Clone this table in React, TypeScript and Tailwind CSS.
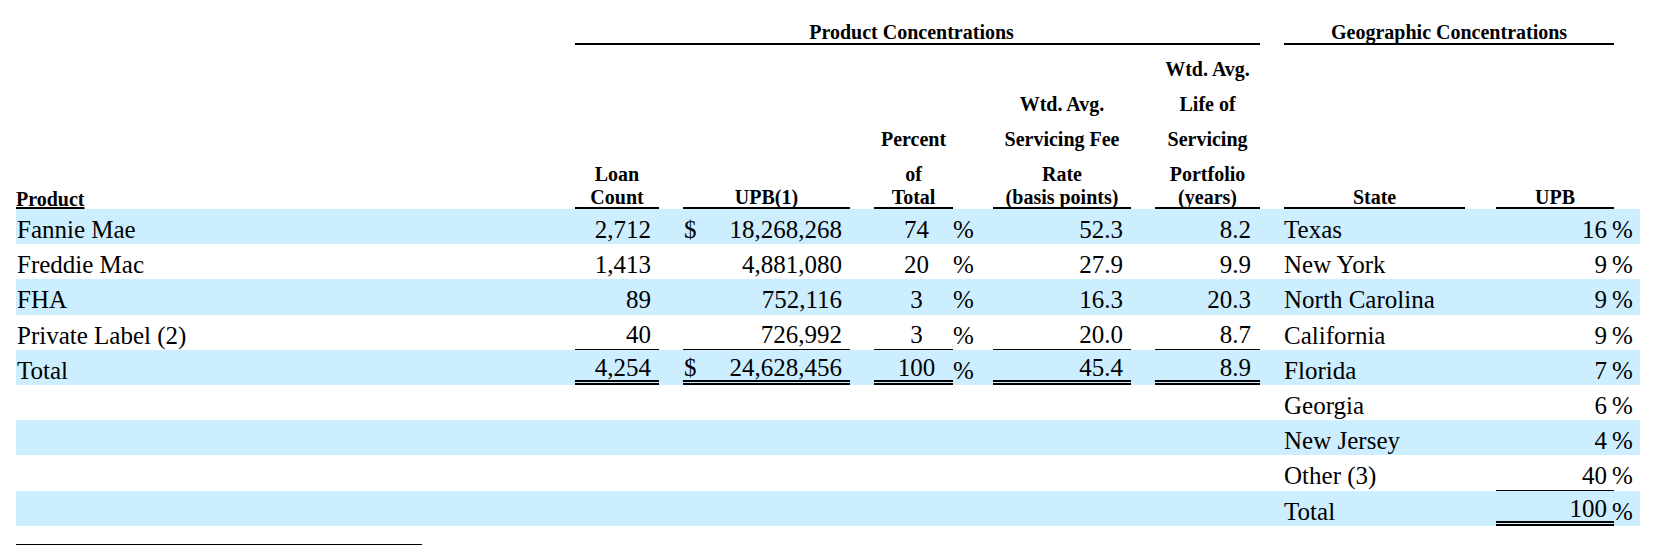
import React from "react";

type Line = "none" | "single" | "double";

type Row = {
  name: string;
  loan: string;
  dollar: boolean;
  upb: string;
  pct: string;
  pctSign: boolean;
  fee: string;
  life: string;
  state: string;
  gupb: string;
  blue: boolean;
  line: Line;
  gline: Line;
};

const rows: Row[] = [
  { name: "Fannie Mae", loan: "2,712", dollar: true, upb: "18,268,268", pct: "74", pctSign: true, fee: "52.3", life: "8.2", state: "Texas", gupb: "16", blue: true, line: "none", gline: "none" },
  { name: "Freddie Mac", loan: "1,413", dollar: false, upb: "4,881,080", pct: "20", pctSign: true, fee: "27.9", life: "9.9", state: "New York", gupb: "9", blue: false, line: "none", gline: "none" },
  { name: "FHA", loan: "89", dollar: false, upb: "752,116", pct: "3", pctSign: true, fee: "16.3", life: "20.3", state: "North Carolina", gupb: "9", blue: true, line: "none", gline: "none" },
  { name: "Private Label (2)", loan: "40", dollar: false, upb: "726,992", pct: "3", pctSign: true, fee: "20.0", life: "8.7", state: "California", gupb: "9", blue: false, line: "single", gline: "none" },
  { name: "Total", loan: "4,254", dollar: true, upb: "24,628,456", pct: "100", pctSign: true, fee: "45.4", life: "8.9", state: "Florida", gupb: "7", blue: true, line: "double", gline: "none" },
  { name: "", loan: "", dollar: false, upb: "", pct: "", pctSign: false, fee: "", life: "", state: "Georgia", gupb: "6", blue: false, line: "none", gline: "none" },
  { name: "", loan: "", dollar: false, upb: "", pct: "", pctSign: false, fee: "", life: "", state: "New Jersey", gupb: "4", blue: true, line: "none", gline: "none" },
  { name: "", loan: "", dollar: false, upb: "", pct: "", pctSign: false, fee: "", life: "", state: "Other (3)", gupb: "40", blue: false, line: "none", gline: "single" },
  { name: "", loan: "", dollar: false, upb: "", pct: "", pctSign: false, fee: "", life: "", state: "Total", gupb: "100", blue: true, line: "none", gline: "double" },
];

function lineCls(l: Line): string {
  if (l === "single") return "border-b border-black";
  if (l === "double") return "border-b-[5px] border-double border-black";
  return "";
}

export default function App() {
  return (
    <div className="w-[1662px] h-[546px] overflow-hidden bg-white text-black [font-family:Liberation_Serif,Times_New_Roman,serif]">
      <table className="ml-[16px] w-[1624px] table-fixed border-separate border-spacing-0">
        <colgroup>
          <col className="w-[559px]" />
          <col className="w-[84px]" />
          <col className="w-[24px]" />
          <col className="w-[167px]" />
          <col className="w-[24px]" />
          <col className="w-[79px]" />
          <col className="w-[40px]" />
          <col className="w-[138px]" />
          <col className="w-[24px]" />
          <col className="w-[105px]" />
          <col className="w-[24px]" />
          <col className="w-[181px]" />
          <col className="w-[31px]" />
          <col className="w-[118px]" />
          <col className="w-[26px]" />
        </colgroup>
        <thead className="text-[20px] font-bold leading-[23px]">
          <tr className="h-[52px]">
            <td className="p-0" />
            <td colSpan={9} className="p-0 pt-[21px] align-top">
              <div className="border-b-2 border-black pr-[12px] text-center leading-[22px]">Product Concentrations</div>
            </td>
            <td className="p-0" />
            <td colSpan={3} className="p-0 pt-[21px] align-top">
              <div className="border-b-2 border-black text-center leading-[22px]">Geographic Concentrations</div>
            </td>
            <td className="p-0" />
          </tr>
          <tr className="h-[35px]">
            <td className="p-0" />
            <td className="p-0" />
            <td className="p-0" />
            <td className="p-0" />
            <td className="p-0" />
            <td className="p-0" />
            <td className="p-0" />
            <td className="p-0" />
            <td className="p-0" />
            <td className="p-0 text-center align-middle">Wtd. Avg.</td>
            <td className="p-0" />
            <td className="p-0" />
            <td className="p-0" />
            <td className="p-0" />
            <td className="p-0" />
          </tr>
          <tr className="h-[35px]">
            <td className="p-0" />
            <td className="p-0" />
            <td className="p-0" />
            <td className="p-0" />
            <td className="p-0" />
            <td className="p-0" />
            <td className="p-0" />
            <td className="p-0 text-center align-middle">Wtd. Avg.</td>
            <td className="p-0" />
            <td className="p-0 text-center align-middle">Life of</td>
            <td className="p-0" />
            <td className="p-0" />
            <td className="p-0" />
            <td className="p-0" />
            <td className="p-0" />
          </tr>
          <tr className="h-[35px]">
            <td className="p-0" />
            <td className="p-0" />
            <td className="p-0" />
            <td className="p-0" />
            <td className="p-0" />
            <td className="p-0 text-center align-middle">Percent</td>
            <td className="p-0" />
            <td className="p-0 text-center align-middle">Servicing Fee</td>
            <td className="p-0" />
            <td className="p-0 text-center align-middle">Servicing</td>
            <td className="p-0" />
            <td className="p-0" />
            <td className="p-0" />
            <td className="p-0" />
            <td className="p-0" />
          </tr>
          <tr className="h-[52px]">
            <td className="p-0 text-left align-bottom">
              <div className="translate-y-[2px]">
                <span className="underline">Product</span>
              </div>
            </td>
            <td className="p-0 text-center align-bottom border-b-2 border-black">
              <div className="translate-y-[2px]">
                Loan
                <br />
                Count
              </div>
            </td>
            <td className="p-0" />
            <td className="p-0 text-center align-bottom border-b-2 border-black">
              <div className="translate-y-[2px]">UPB(1)</div>
            </td>
            <td className="p-0" />
            <td className="p-0 text-center align-bottom border-b-2 border-black">
              <div className="translate-y-[2px]">
                of
                <br />
                Total
              </div>
            </td>
            <td className="p-0" />
            <td className="p-0 text-center align-bottom border-b-2 border-black">
              <div className="translate-y-[2px]">
                Rate
                <br />
                (basis points)
              </div>
            </td>
            <td className="p-0" />
            <td className="p-0 text-center align-bottom border-b-2 border-black">
              <div className="translate-y-[2px]">
                Portfolio
                <br />
                (years)
              </div>
            </td>
            <td className="p-0" />
            <td className="p-0 text-center align-bottom border-b-2 border-black">
              <div className="translate-y-[2px]">State</div>
            </td>
            <td className="p-0" />
            <td className="p-0 text-center align-bottom border-b-2 border-black">
              <div className="translate-y-[2px]">UPB</div>
            </td>
            <td className="p-0" />
          </tr>
        </thead>
        <tbody className="text-[25px] leading-[23px] font-normal">
          {rows.map((r, i) => (
            <tr key={i} className={r.blue ? "h-[35.2px] bg-[#cceeff]" : "h-[35.2px]"}>
              <td className="p-0 pt-[6px] pl-[1px] text-left align-middle whitespace-nowrap">{r.name}</td>
              <td className={`p-0 pt-[6px] pr-[8px] text-right align-middle ${lineCls(r.line)}`}>{r.loan}</td>
              <td className="p-0" />
              <td className={`p-0 pt-[6px] pl-[1px] pr-[8px] align-middle ${lineCls(r.line)}`}>
                <div className="flex justify-between">
                  <span>{r.dollar ? "$" : ""}</span>
                  <span>{r.upb}</span>
                </div>
              </td>
              <td className="p-0" />
              <td className={`p-0 pt-[6px] pl-[6px] text-center align-middle ${lineCls(r.line)}`}>{r.pct}</td>
              <td className="p-0 pt-[6px] text-left align-middle">{r.pctSign ? "%" : ""}</td>
              <td className={`p-0 pt-[6px] pr-[8px] text-right align-middle ${lineCls(r.line)}`}>{r.fee}</td>
              <td className="p-0" />
              <td className={`p-0 pt-[6px] pr-[9px] text-right align-middle ${lineCls(r.line)}`}>{r.life}</td>
              <td className="p-0" />
              <td className="p-0 pt-[6px] text-left align-middle whitespace-nowrap">{r.state}</td>
              <td className="p-0" />
              <td className={`p-0 pt-[6px] pr-[7px] text-right align-middle ${lineCls(r.gline)}`}>{r.gupb}</td>
              <td className="p-0 pt-[6px] text-left align-middle">
                <span className="inline-block -ml-[2px]">%</span>
              </td>
            </tr>
          ))}
        </tbody>
      </table>
      <div className="ml-[16px] mt-[18px] w-[406px] border-t border-black" />
    </div>
  );
}
